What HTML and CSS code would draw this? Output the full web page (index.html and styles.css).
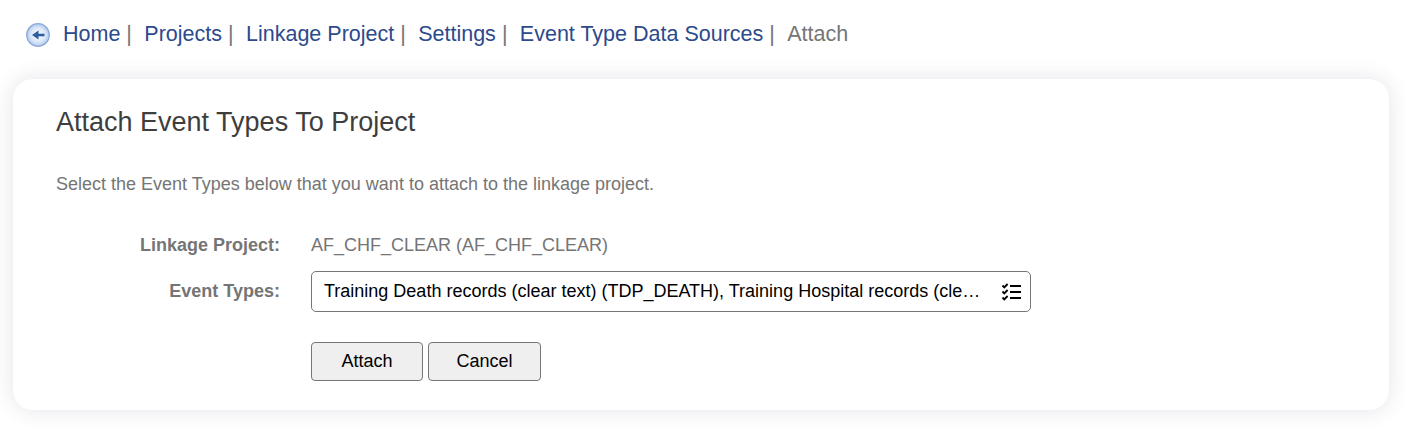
FILE: index.html
```html
<!DOCTYPE html>
<html lang="en">
<head>
  <meta charset="UTF-8">
  <title>Attach Event Types To Project</title>
  <link rel="stylesheet" href="styles.css">
</head>
<body>
  <nav class="breadcrumb">
    <svg class="back-icon" width="26" height="26" viewBox="0 0 26 26">
      <defs>
        <radialGradient id="backFill" cx="50%" cy="50%" r="55%">
          <stop offset="0%" stop-color="#ffffff"/>
          <stop offset="60%" stop-color="#d8e6f8"/>
          <stop offset="100%" stop-color="#9fbfe8"/>
        </radialGradient>
      </defs>
      <circle cx="13" cy="13" r="11.3" fill="url(#backFill)" stroke="#8aa8d6" stroke-width="1.2"/>
      <path d="M19.5 13H12" fill="none" stroke="#2f5f9e" stroke-width="2.6"/>
      <path d="M13.5 8.5L7 13l6.5 4.5z" fill="#2f5f9e"/>
    </svg>
    <a href="#">Home</a><span class="sep">|</span>
    <a href="#">Projects</a><span class="sep">|</span>
    <a href="#">Linkage Project</a><span class="sep">|</span>
    <a href="#">Settings</a><span class="sep">|</span>
    <a href="#">Event Type Data Sources</a><span class="sep">|</span>
    <span class="current">Attach</span>
  </nav>

  <main class="card">
    <h1>Attach Event Types To Project</h1>
    <p class="intro">Select the Event Types below that you want to attach to the linkage project.</p>

    <div class="form-row project-row">
      <div class="label">Linkage Project:</div>
      <div class="value">AF_CHF_CLEAR (AF_CHF_CLEAR)</div>
    </div>
    <div class="form-row types-row">
      <div class="label">Event Types:</div>
      <div class="select">
        <span class="select-text">Training Death records (clear text) (TDP_DEATH), Training Hospital records (clear text) (TDP_HOSP)</span>
        <svg class="select-icon" width="20" height="18" viewBox="0 0 20 18">
          <path d="M1.5 2.5l1.8 1.8L6.6 1M1.5 8.5l1.8 1.8L6.6 7M1.5 14.5l1.8 1.8L6.6 13" fill="none" stroke="#000" stroke-width="1.9"/>
          <path d="M9 3h11M9 9h11M9 15h11" fill="none" stroke="#000" stroke-width="2"/>
        </svg>
      </div>
    </div>
    <div class="buttons">
      <button class="btn btn-attach">Attach</button>
      <button class="btn btn-cancel">Cancel</button>
    </div>
  </main>
</body>
</html>
```

FILE: styles.css
```css
body {
  margin: 0;
  height: 427px;
  overflow: hidden;
  background-color: #fff;
  font-family: "Liberation Sans", Arial, sans-serif;
  color: #757575;
}

.breadcrumb {
  display: flex;
  align-items: center;
  height: 26px;
  padding: 21px 0 0 25px;
  font-size: 21.5px;
  white-space: nowrap;
}

.back-icon {
  margin: 2px 12px 0 0;
}

.breadcrumb a {
  color: #2c4a8c;
  text-decoration: none;
}

.sep {
  margin: 0 12.4px 0 6px;
  color: #757575;
}

.current {
  color: #757575;
}

.card {
  box-sizing: border-box;
  width: 1376px;
  height: 331px;
  margin: 32px 0 0 13px;
  padding: 28px 43px 0;
  background-color: #fff;
  border-radius: 20px;
  box-shadow: 0 0 22px rgba(40, 50, 80, 0.13);
}

h1 {
  margin: 0;
  font-size: 27px;
  line-height: 30px;
  font-weight: normal;
  color: #3e3e3e;
}

.intro {
  margin: 37px 0 0;
  font-size: 18px;
  line-height: 20px;
}

.form-row {
  display: flex;
  align-items: center;
  font-size: 18px;
}

.project-row {
  margin-top: 41px;
  height: 20px;
}

.types-row {
  margin-top: 16px;
}

.label {
  width: 224px;
  margin-right: 31px;
  text-align: right;
  font-weight: bold;
}

.select {
  box-sizing: border-box;
  display: flex;
  align-items: center;
  width: 720px;
  height: 41px;
  padding: 0 9px 0 12px;
  border: 1px solid #767676;
  border-radius: 5px;
  color: #000;
}

.select-text {
  flex: 1;
  min-width: 0;
  overflow: hidden;
  white-space: nowrap;
  text-overflow: ellipsis;
}

.select-icon {
  margin-left: 18px;
}

.buttons {
  display: flex;
  gap: 5px;
  margin: 30px 0 0 255px;
}

.btn {
  height: 39px;
  padding: 0;
  border: 1px solid #767676;
  border-radius: 4px;
  background-color: #efefef;
  color: #000;
  font-family: inherit;
  font-size: 18px;
}

.btn-attach {
  width: 112px;
}

.btn-cancel {
  width: 113px;
}
```
